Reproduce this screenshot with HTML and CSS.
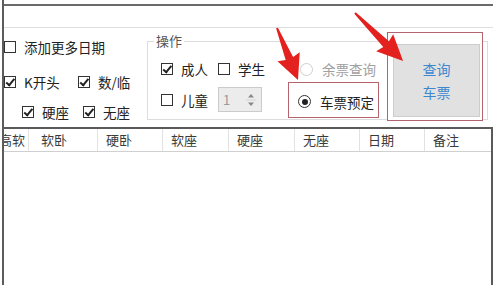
FILE: index.html
```html
<!DOCTYPE html>
<html lang="zh">
<head>
<meta charset="utf-8">
<link rel="stylesheet" href="styles.css">
</head>
<body>
<div class="window">
  <div class="titlebar"></div>
  <div class="controls">
    <div class="opts">
      <div class="row"><label class="ck"><span class="box"></span>添加更多日期</label></div>
      <div class="row"><label class="ck w74"><span class="box on"></span>K开头</label><label class="ck"><span class="box on"></span>数/临</label></div>
      <div class="row indent"><label class="ck w61"><span class="box on"></span>硬座</label><label class="ck"><span class="box on"></span>无座</label></div>
    </div>
    <div class="group">
      <span class="legend">操作</span>
      <div class="grp-checks">
        <div class="grow"><label class="ck w57"><span class="box on"></span>成人</label><label class="ck"><span class="box"></span>学生</label></div>
        <div class="grow"><label class="ck w57"><span class="box"></span>儿童</label>
          <div class="spin"><span class="spin-val">1</span>
            <svg class="spin-btn" viewBox="0 0 14 22" width="14" height="22"><path d="M4 8.5 L7 5 L10 8.5 Z" fill="#888"/><path d="M4 13.5 L7 17 L10 13.5 Z" fill="#888"/><path d="M2 11 H12" stroke="#d4d4d4" stroke-width="1"/></svg>
          </div>
        </div>
      </div>
      <div class="grp-radios">
        <label class="rd disabled"><span class="circ"></span>余票查询</label>
        <div class="mark"><label class="rd"><span class="circ on"></span>车票预定</label></div>
      </div>
      <div class="grp-btn"><button class="query">查询<br>车票</button></div>
    </div>
  </div>
  <div class="table">
    <div class="thead">
      <div class="th first"><span>高软</span></div>
      <div class="th wide">软卧</div>
      <div class="th">硬卧</div>
      <div class="th">软座</div>
      <div class="th">硬座</div>
      <div class="th">无座</div>
      <div class="th">日期</div>
      <div class="th last">备注</div>
    </div>
    <div class="tbody"></div>
  </div>
  <svg class="arrows" width="500" height="295" viewBox="0 0 500 295">
    <g transform="translate(277 28) rotate(68)">
      <polygon points="0,-1 33,-4 31,-12 56,0 31,12 33,4 0,1" fill="#e3211f"/>
    </g>
    <g transform="translate(355 13) rotate(45)">
      <polygon points="0,-1 44,-4 42,-12 68,0 42,12 44,4 0,1" fill="#e3211f"/>
    </g>
  </svg>
</div>
</body>
</html>
```

FILE: styles.css
```css
* { box-sizing: border-box; }
html, body { margin: 0; padding: 0; background: #fff; }
body {
  font-family: "Noto Sans CJK SC", "Microsoft YaHei", sans-serif;
  font-size: 13.5px;
  color: #222;
  width: 500px;
  height: 295px;
  overflow: hidden;
}
.window {
  position: relative;
  margin-left: 2px;
  width: 491px;
  height: 285px;
  border-left: 2px solid #5c5c5c;
  display: flex;
  flex-direction: column;
}
.titlebar {
  margin-top: 4px;
  height: 24px;
  border-top: 2px solid #6a6a6a;
  border-bottom: 1px solid #dedede;
}
.controls {
  height: 99px;
  display: flex;
  flex-shrink: 0;
}
.opts {
  width: 143px;
  display: grid;
  grid-template-rows: 35px 30px 20px;
  padding-top: 9px;
}
.row { display: flex; align-items: center; height: 20px; }
.row.indent { padding-left: 18px; }
.ck {
  display: inline-flex;
  align-items: center;
  gap: 8px;
  line-height: 20px;
  white-space: nowrap;
}
.w74 { width: 74px; }
.w61 { width: 61px; }
.w57 { width: 57px; }
.box {
  position: relative;
  width: 12px;
  height: 12px;
  border: 1.5px solid #333;
  background: #fff;
  flex-shrink: 0;
}
.box.on::after {
  content: "";
  position: absolute;
  left: 3px;
  top: 0px;
  width: 3px;
  height: 6.5px;
  border-right: 2px solid #222;
  border-bottom: 2px solid #222;
  transform: rotate(40deg);
}
.group {
  position: relative;
  margin-top: 13px;
  width: 341px;
  height: 79px;
  border: 1px solid #dcdcdc;
  display: flex;
  padding-left: 13px;
}
.legend {
  position: absolute;
  left: 6px;
  top: -8px;
  padding: 0 2px;
  background: #fff;
  font-size: 13px;
  line-height: 14px;
  color: #555;
}
.grp-checks {
  width: 127px;
  padding-top: 17px;
  display: flex;
  flex-direction: column;
  gap: 8px;
}
.grow { display: flex; align-items: center; min-height: 20px; }
.spin {
  width: 44px;
  height: 25px;
  border: 1px solid #cbcbcb;
  background: #ececec;
  display: flex;
  align-items: center;
  justify-content: space-between;
  padding: 0 3px 0 4px;
}
.spin-val { color: #9a9a9a; font-size: 13px; }
.grp-radios {
  width: 99px;
  padding-top: 17px;
  display: flex;
  flex-direction: column;
  gap: 3px;
}
.rd {
  display: inline-flex;
  align-items: center;
  gap: 9px;
  line-height: 20px;
  white-space: nowrap;
  padding-left: 12px;
}
.rd.disabled { color: #a0a0a0; }
.circ {
  width: 13px;
  height: 13px;
  border-radius: 50%;
  border: 1px solid #333;
  display: flex;
  align-items: center;
  justify-content: center;
  flex-shrink: 0;
}
.rd.disabled .circ { border-color: #cfcfcf; }
.circ.on::after {
  content: "";
  width: 6px;
  height: 6px;
  border-radius: 50%;
  background: #222;
}
.mark {
  width: 91px;
  height: 36px;
  border: 1.5px solid #b4646e;
  display: flex;
  align-items: center;
  padding-top: 3px;
}
.mark .rd { padding-left: 9px; }
.grp-btn {
  margin-top: -10px;
  width: 96px;
  height: 89px;
  border: 1.5px solid #b4646e;
  background: #fff;
  padding: 11px 2px 3px 5px;
}
.query {
  width: 100%;
  height: 100%;
  border: 1px solid #cdcdcd;
  background: #e1e1e1;
  color: #3b88cf;
  font-family: inherit;
  font-size: 14px;
  line-height: 23px;
  padding: 0;
}
.table {
  flex: 1;
  border-top: 2px solid #5a5a5a;
  border-right: 2px solid #5a5a5a;
  display: flex;
  flex-direction: column;
}
.thead {
  display: grid;
  grid-template-columns: 25px 69px 65px 66px 66px 65px 65px 65px;
  height: 23px;
  border-bottom: 1px solid #d0d0d0;
}
.th {
  border-right: 1px solid #e2e2e2;
  padding-left: 8px;
  font-size: 13px;
  line-height: 22px;
  color: #3a3a3a;
  white-space: nowrap;
  overflow: hidden;
}
.th.wide { padding-left: 12px; }
.th.last { border-right: none; }
.th.first {
  padding: 0 3px 0 0;
  display: flex;
  justify-content: flex-end;
}
.tbody { flex: 1; }
.arrows {
  position: absolute;
  left: -4px;
  top: 0;
  pointer-events: none;
}
```
